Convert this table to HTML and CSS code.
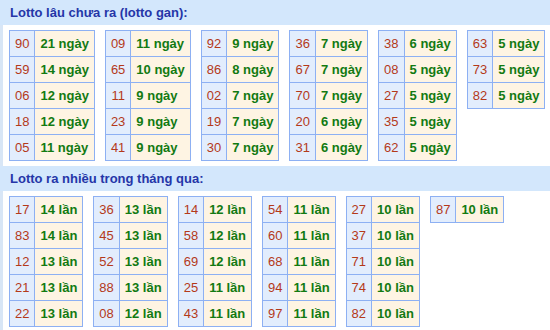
FILE: index.html
```html
<!DOCTYPE html>
<html lang="vi">
<head>
<meta charset="utf-8">
<link rel="stylesheet" href="styles.css">
</head>
<body>
<div class="page">
  <section class="block">
    <h2 class="block-title">Lotto lâu chưa ra (lotto gan):</h2>
    <div class="tables">
      <table class="lt"><tbody>
        <tr><td class="num">90</td><td class="val">21 ngày</td></tr>
        <tr><td class="num">59</td><td class="val">14 ngày</td></tr>
        <tr><td class="num">06</td><td class="val">12 ngày</td></tr>
        <tr><td class="num">18</td><td class="val">12 ngày</td></tr>
        <tr><td class="num">05</td><td class="val">11 ngày</td></tr>
      </tbody></table>
      <table class="lt"><tbody>
        <tr><td class="num">09</td><td class="val">11 ngày</td></tr>
        <tr><td class="num">65</td><td class="val">10 ngày</td></tr>
        <tr><td class="num">11</td><td class="val">9 ngày</td></tr>
        <tr><td class="num">23</td><td class="val">9 ngày</td></tr>
        <tr><td class="num">41</td><td class="val">9 ngày</td></tr>
      </tbody></table>
      <table class="lt"><tbody>
        <tr><td class="num">92</td><td class="val">9 ngày</td></tr>
        <tr><td class="num">86</td><td class="val">8 ngày</td></tr>
        <tr><td class="num">02</td><td class="val">7 ngày</td></tr>
        <tr><td class="num">19</td><td class="val">7 ngày</td></tr>
        <tr><td class="num">30</td><td class="val">7 ngày</td></tr>
      </tbody></table>
      <table class="lt"><tbody>
        <tr><td class="num">36</td><td class="val">7 ngày</td></tr>
        <tr><td class="num">67</td><td class="val">7 ngày</td></tr>
        <tr><td class="num">70</td><td class="val">7 ngày</td></tr>
        <tr><td class="num">20</td><td class="val">6 ngày</td></tr>
        <tr><td class="num">31</td><td class="val">6 ngày</td></tr>
      </tbody></table>
      <table class="lt"><tbody>
        <tr><td class="num">38</td><td class="val">6 ngày</td></tr>
        <tr><td class="num">08</td><td class="val">5 ngày</td></tr>
        <tr><td class="num">27</td><td class="val">5 ngày</td></tr>
        <tr><td class="num">35</td><td class="val">5 ngày</td></tr>
        <tr><td class="num">62</td><td class="val">5 ngày</td></tr>
      </tbody></table>
      <table class="lt"><tbody>
        <tr><td class="num">63</td><td class="val">5 ngày</td></tr>
        <tr><td class="num">73</td><td class="val">5 ngày</td></tr>
        <tr><td class="num">82</td><td class="val">5 ngày</td></tr>
      </tbody></table>
    </div>
  </section>
  <section class="block">
    <h2 class="block-title">Lotto ra nhiều trong tháng qua:</h2>
    <div class="tables">
      <table class="lt"><tbody>
        <tr><td class="num">17</td><td class="val">14 lần</td></tr>
        <tr><td class="num">83</td><td class="val">14 lần</td></tr>
        <tr><td class="num">12</td><td class="val">13 lần</td></tr>
        <tr><td class="num">21</td><td class="val">13 lần</td></tr>
        <tr><td class="num">22</td><td class="val">13 lần</td></tr>
      </tbody></table>
      <table class="lt"><tbody>
        <tr><td class="num">36</td><td class="val">13 lần</td></tr>
        <tr><td class="num">45</td><td class="val">13 lần</td></tr>
        <tr><td class="num">52</td><td class="val">13 lần</td></tr>
        <tr><td class="num">88</td><td class="val">13 lần</td></tr>
        <tr><td class="num">08</td><td class="val">12 lần</td></tr>
      </tbody></table>
      <table class="lt"><tbody>
        <tr><td class="num">14</td><td class="val">12 lần</td></tr>
        <tr><td class="num">58</td><td class="val">12 lần</td></tr>
        <tr><td class="num">69</td><td class="val">12 lần</td></tr>
        <tr><td class="num">25</td><td class="val">11 lần</td></tr>
        <tr><td class="num">43</td><td class="val">11 lần</td></tr>
      </tbody></table>
      <table class="lt"><tbody>
        <tr><td class="num">54</td><td class="val">11 lần</td></tr>
        <tr><td class="num">60</td><td class="val">11 lần</td></tr>
        <tr><td class="num">68</td><td class="val">11 lần</td></tr>
        <tr><td class="num">94</td><td class="val">11 lần</td></tr>
        <tr><td class="num">97</td><td class="val">11 lần</td></tr>
      </tbody></table>
      <table class="lt"><tbody>
        <tr><td class="num">27</td><td class="val">10 lần</td></tr>
        <tr><td class="num">37</td><td class="val">10 lần</td></tr>
        <tr><td class="num">71</td><td class="val">10 lần</td></tr>
        <tr><td class="num">74</td><td class="val">10 lần</td></tr>
        <tr><td class="num">82</td><td class="val">10 lần</td></tr>
      </tbody></table>
      <table class="lt"><tbody>
        <tr><td class="num">87</td><td class="val">10 lần</td></tr>
      </tbody></table>
    </div>
  </section>
</div>
</body>
</html>
```
FILE: styles.css
```css
html, body {
  margin: 0;
  padding: 0;
  background: #ffffff;
}

.page {
  border-left: 3px solid #d8e6f6;
  min-height: 330px;
  font-family: "Liberation Sans", Arial, sans-serif;
}

.block-title {
  margin: 0 0 0 -3px;
  height: 25px;
  line-height: 25px;
  padding-left: 10px;
  background: #d3e7fc;
  color: #2536a8;
  font-size: 13px;
  font-weight: bold;
}

.tables {
  display: flex;
  align-items: flex-start;
  gap: 10px;
  padding: 5px 0 5px 6px;
}

.lt {
  border-collapse: separate;
  border-spacing: 0;
  border-top: 1px solid #8db0f3;
  border-left: 1px solid #8db0f3;
  font-size: 13px;
}

.lt td {
  height: 25px;
  padding: 0 5px;
  border-right: 1px solid #8db0f3;
  border-bottom: 1px solid #8db0f3;
  white-space: nowrap;
}

.lt .num {
  background: #e2edfd;
  color: #b4391a;
  text-align: center;
}

.lt .val {
  background: #fef4e3;
  color: #127a12;
  font-weight: bold;
  text-align: left;
}
```
